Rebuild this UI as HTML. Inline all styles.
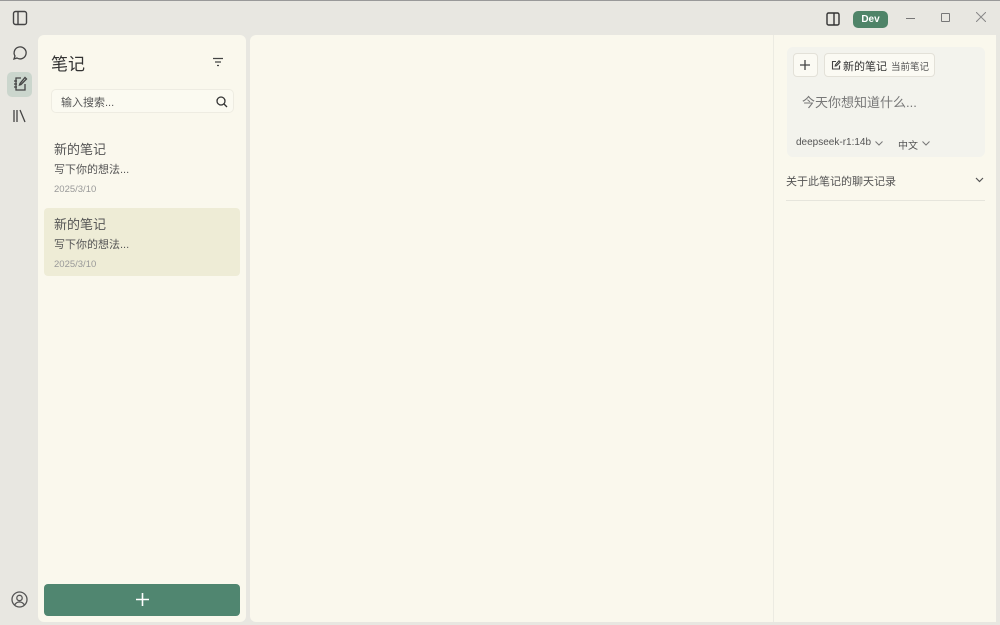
<!DOCTYPE html>
<html><head><meta charset="utf-8"><style>
*{margin:0;padding:0;box-sizing:border-box}
body{width:1000px;height:625px;overflow:hidden;background:#e8e7e1;font-family:"Liberation Sans","Noto Sans CJK SC",sans-serif;position:relative;color:#333}
.abs{position:absolute}
svg{display:block}
.list{left:38px;top:35px;width:208px;height:587px;background:#faf8ed;border-radius:6px}
.mid{left:250px;top:35px;width:523px;height:587px;background:#faf8ed;border-radius:6px 0 0 6px}
.right{left:773px;top:35px;width:223px;height:587px;background:#faf8ed;border-left:1px solid #ecebe2}
</style></head><body>
<div class="abs" style="left:0;top:0;width:1000px;height:1px;background:#999"></div>
<svg class="abs" style="left:12px;top:10px" width="16" height="16" viewBox="0 0 16 16" fill="none" stroke="#444" stroke-width="1.4"><rect x="1.5" y="1.5" width="13" height="13" rx="2"/><line x1="6" y1="1.5" x2="6" y2="14.5"/></svg>
<svg class="abs" style="left:11px;top:45px" width="17" height="17" viewBox="0 0 17 17" fill="none" stroke="#444" stroke-width="1.3"><path d="M3 14l1-3a6 6 0 1 1 2 2z"/></svg>
<div class="abs" style="left:7px;top:72px;width:25px;height:25px;background:#cbd6cd;border-radius:5px"></div>
<svg class="abs" style="left:12px;top:76px" width="16" height="16" viewBox="0 0 16 16" fill="none" stroke="#444" stroke-width="1.3"><path d="M9 2H4v12h9V8"/><path d="M2 5h3M2 8h3M2 11h3"/><path d="M13 1.5l1.5 1.5L9 8.5 7.5 9 8 7.5z"/></svg>
<svg class="abs" style="left:12px;top:108px" width="16" height="16" viewBox="0 0 16 16" fill="none" stroke="#444" stroke-width="1.3"><path d="M2 2v12M5 2v12M8 2l5 12"/></svg>
<svg class="abs" style="left:11px;top:591px" width="17" height="17" viewBox="0 0 17 17" fill="none" stroke="#555" stroke-width="1.3"><circle cx="8.5" cy="8.5" r="7.5"/><circle cx="8.5" cy="7" r="2.7"/><path d="M3.7 14c1-2 3-3 4.8-3s3.8 1 4.8 3"/></svg>
<div class="abs list">
<div class="abs" style="left:13px;top:15px;font-size:17px;color:#333">笔记</div>
<svg class="abs" style="left:174px;top:22px" width="12" height="10" viewBox="0 0 12 10" stroke="#444" stroke-width="1.3"><path d="M1 1.5h10M3 5h6M5 8.5h2"/></svg>
<div class="abs" style="left:13px;top:54px;width:183px;height:24px;border:1px solid #eeece2;border-radius:5px;background:#fbfaf1"><span class="abs" style="left:9px;top:4px;font-size:11px;color:#555">输入搜索...</span>
<svg class="abs" style="left:164px;top:6px" width="12" height="12" viewBox="0 0 12 12" fill="none" stroke="#333" stroke-width="1.3"><circle cx="5" cy="5" r="4"/><path d="M8 8l3 3"/></svg></div>
<div class="abs" style="left:16px;top:104px;font-size:13px;color:#555">新的笔记</div>
<div class="abs" style="left:16px;top:126px;font-size:11px;color:#555">写下你的想法...</div>
<div class="abs" style="left:16px;top:149px;font-size:9.5px;color:#999">2025/3/10</div>
<div class="abs" style="left:6px;top:173px;width:196px;height:68px;background:#eeecd6;border-radius:4px"></div>
<div class="abs" style="left:16px;top:179px;font-size:13px;color:#555">新的笔记</div>
<div class="abs" style="left:16px;top:201px;font-size:11px;color:#555">写下你的想法...</div>
<div class="abs" style="left:16px;top:224px;font-size:9.5px;color:#999">2025/3/10</div>
<div class="abs" style="left:6px;top:549px;width:196px;height:32px;background:#508670;border-radius:4px"></div>
<svg class="abs" style="left:98px;top:558px" width="13" height="13" viewBox="0 0 13 13" stroke="#fff" stroke-width="1.6"><path d="M6.5 0v13M0 6.5h13"/></svg>
</div>
<div class="abs mid"></div>
<div class="abs right">
<div class="abs" style="left:13px;top:12px;width:198px;height:110px;background:#f3f3ed;border-radius:6px"></div>
<div class="abs" style="left:19px;top:18px;width:25px;height:24px;background:#fbfaf3;border:1px solid #e3e1d8;border-radius:4px"></div>
<svg class="abs" style="left:26px;top:25px" width="10" height="10" viewBox="0 0 10 10" stroke="#444" stroke-width="1.3"><path d="M5 0v10M0 5h10"/></svg>
<div class="abs" style="left:50px;top:18px;width:111px;height:24px;background:#fbfaf3;border:1px solid #e3e1d8;border-radius:4px;white-space:nowrap">
<svg class="abs" style="left:6px;top:6px" width="10" height="10" viewBox="0 0 10 10" fill="none" stroke="#444" stroke-width="1.1"><path d="M5 1.5H1.5v7.5h7V5.5"/><path d="M8 0.8l1.2 1.2L5.5 5.7 4.2 6 4.5 4.7z"/></svg>
<span class="abs" style="left:18px;top:4px;font-size:11px;color:#333">新的笔记</span><span class="abs" style="left:66px;top:5px;font-size:9.5px;color:#555">当前笔记</span></div>
<div class="abs" style="left:28px;top:57px;font-size:13px;color:#777">今天你想知道什么...</div>
<div class="abs" style="left:22px;top:102px;font-size:10px;color:#555">deepseek-r1:14b</div>
<svg class="abs" style="left:101px;top:106px" width="8" height="5" viewBox="0 0 8 5" fill="none" stroke="#777" stroke-width="1"><path d="M0.5 0.5L4 4l3.5-3.5"/></svg>
<div class="abs" style="left:124px;top:102px;font-size:10px;color:#555">中文</div>
<svg class="abs" style="left:148px;top:106px" width="8" height="5" viewBox="0 0 8 5" fill="none" stroke="#777" stroke-width="1"><path d="M0.5 0.5L4 4l3.5-3.5"/></svg>
<div class="abs" style="left:12px;top:138px;font-size:11px;color:#555">关于此笔记的聊天记录</div>
<svg class="abs" style="left:201px;top:142px" width="9" height="6" viewBox="0 0 9 6" fill="none" stroke="#555" stroke-width="1.2"><path d="M1 1l3.5 3.5L8 1"/></svg>
<div class="abs" style="left:12px;top:165px;width:199px;height:1px;background:#e6e5dc"></div>
</div>
<svg class="abs" style="left:826px;top:12px" width="14" height="14" viewBox="0 0 14 14" fill="none" stroke="#333" stroke-width="1.4"><rect x="1" y="1" width="12" height="12" rx="1.5"/><line x1="8" y1="1" x2="8" y2="13"/></svg>
<div class="abs" style="left:853px;top:11px;width:35px;height:17px;background:#4f8468;border-radius:5px;color:#fff;font-size:10px;font-weight:bold;text-align:center;line-height:17px">Dev</div>
<div class="abs" style="left:906px;top:18px;width:9px;height:1px;background:#777"></div>
<div class="abs" style="left:941px;top:13px;width:9px;height:9px;border:1px solid #777;border-radius:1px"></div>
<svg class="abs" style="left:976px;top:12px" width="10" height="10" viewBox="0 0 10 10" stroke="#888" stroke-width="1"><path d="M0 0l10 10M10 0L0 10"/></svg>
</body></html>
